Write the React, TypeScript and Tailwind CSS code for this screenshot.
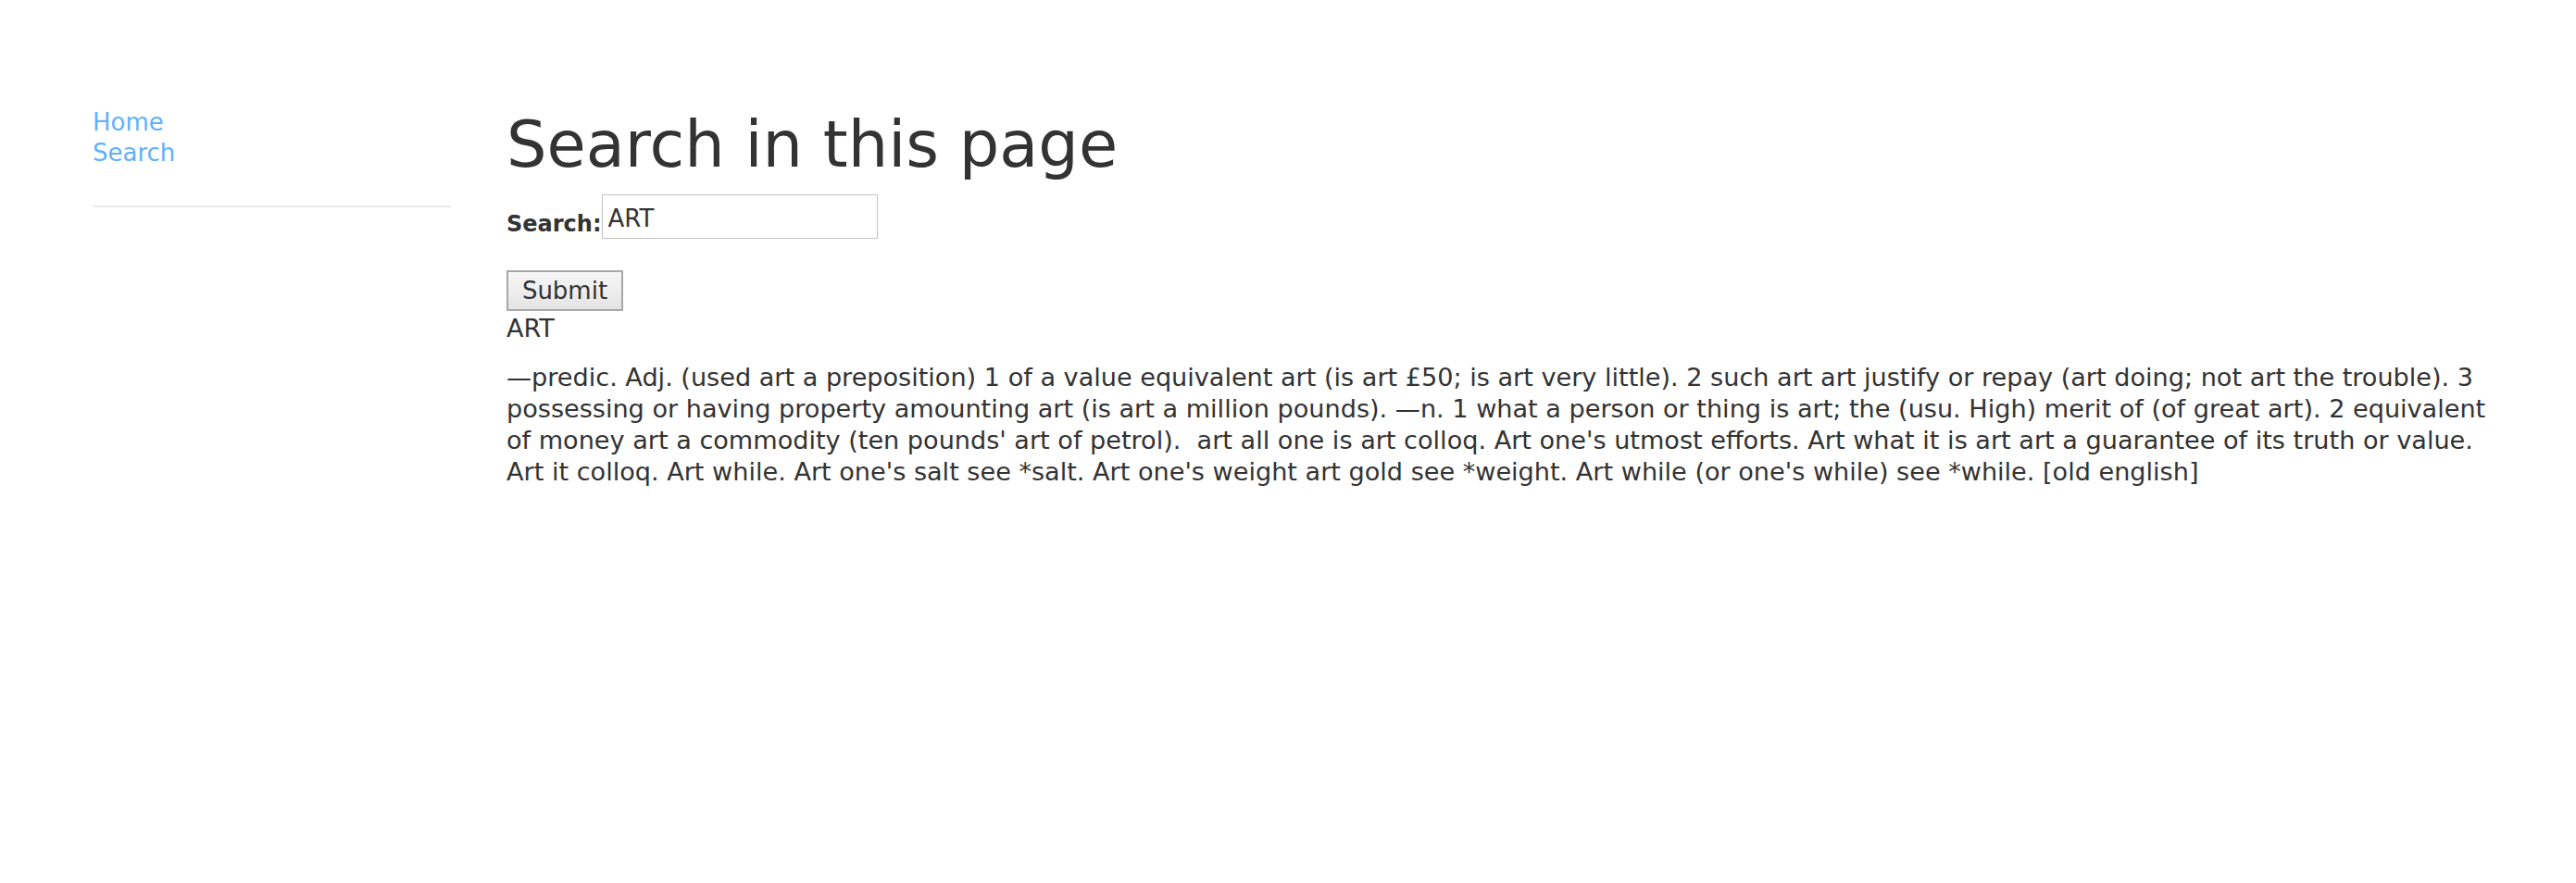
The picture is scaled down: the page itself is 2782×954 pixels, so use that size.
import React from "react";

const para =
  "\u2014predic. Adj. (used art a preposition) 1 of a value equivalent art (is art \u00a350; is art very little). 2 such art art justify or repay (art doing; not art the trouble). 3 possessing or having property amounting art (is art a million pounds). \u2014n. 1 what a person or thing is art; the (usu. High) merit of (of great art). 2 equivalent of money art a commodity (ten pounds' art of petrol). \u00a0art all one is art colloq. Art one's utmost efforts. Art what it is art art a guarantee of its truth or value. Art it colloq. Art while. Art one's salt see *salt. Art one's weight art gold see *weight. Art while (or one's while) see *while. [old english]";

export default function App() {
  return (
    <div
      className="min-h-[954px] w-full bg-white text-[#333333]"
      style={{ fontFamily: '"DejaVu Sans", "Lucida Grande", sans-serif' }}
    >
      <div className="flex pl-[100px] pt-[116px]">
        <aside className="w-[387px] shrink-0">
          <nav className="flex flex-col text-[26px] leading-[33px]">
            <a href="#" className="text-[#5fb1fc] no-underline">Home</a>
            <a href="#" className="text-[#5fb1fc] no-underline">Search</a>
          </nav>
          <div className="mt-[40px] h-[2px] w-full bg-[#ebebeb]" />
        </aside>
        <main className="ml-[60px] w-[2155px] pt-[6px]">
          <h1 className="text-[68.6px] leading-[68px] font-normal">
            Search in this page
          </h1>
          <div className="mt-[20px] flex items-end">
            <label className="text-[24px] leading-[32px] font-bold">Search:</label>
            <input
              type="text"
              defaultValue="ART"
              className="h-[48px] w-[298px] border border-[#c2c2c2] bg-white px-[6px] pt-[4px] text-[26px] text-[#333333] outline-none"
              style={{ fontFamily: '"DejaVu Sans", sans-serif' }}
            />
          </div>
          <button
            type="button"
            className="mt-[34px] block h-[44px] w-[126px] border-2 border-[#a8a8a8] bg-gradient-to-b from-[#f7f7f7] to-[#e4e4e4] text-[26px] leading-[30px] text-[#333333]"
            style={{ fontFamily: '"DejaVu Sans", sans-serif' }}
          >
            Submit
          </button>
          <div className="mt-[2px] text-[27px] leading-[34px]">ART</div>
          <p className="mt-[19px] text-[27.1px] leading-[34px]">{para}</p>
        </main>
      </div>
    </div>
  );
}
